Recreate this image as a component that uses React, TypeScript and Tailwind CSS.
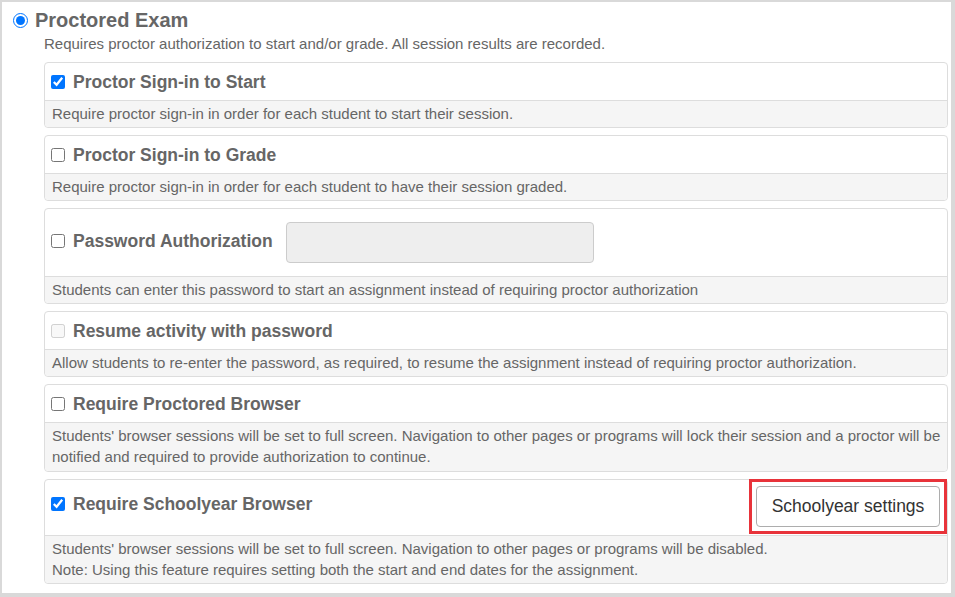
import type { ReactNode } from "react";

type OptionCardProps = {
  title: string;
  checked?: boolean;
  disabled?: boolean;
  headerClass: string;
  labelClass?: string;
  footerClass?: string;
  aside?: ReactNode;
  children: ReactNode;
};

function OptionCard({
  title,
  checked = false,
  disabled = false,
  headerClass,
  labelClass = "",
  footerClass = "pt-[2px] pb-[3px]",
  aside,
  children,
}: OptionCardProps) {
  return (
    <div className="mr-[3px] ml-[42px] overflow-visible rounded-[4px] border border-[#dddddd] bg-white">
      <div className={`flex pr-[7px] pl-[6px] ${headerClass}`}>
        <label className={`flex items-center gap-[8px] ${labelClass}`}>
          <input
            type="checkbox"
            defaultChecked={checked}
            disabled={disabled}
            className="m-0 h-[14px] w-[14px] accent-[#0075ff]"
          />
          <span className="text-[17.5px] leading-[24px] font-bold text-[#666666]">{title}</span>
        </label>
        {aside}
      </div>
      <div
        className={`rounded-b-[4px] border-t border-[#dddddd] bg-[#f5f5f5] pr-[6px] pl-[7px] text-[15px] leading-[21px] text-[#666666] ${footerClass}`}
      >
        {children}
      </div>
    </div>
  );
}

export default function App() {
  return (
    <div
      className="h-[597px] w-[955px] overflow-hidden border-t-2 border-r-4 border-b-4 border-l-2 border-[#d9d9d9] bg-white"
      style={{ fontFamily: '"Liberation Sans", Arial, sans-serif' }}
    >
      <div className="pt-[6px]">
        <label className="flex h-[24px] items-center gap-[7px] pl-[11px]">
          <input type="radio" defaultChecked name="mode" className="m-0 h-[15px] w-[15px] accent-[#0075ff]" />
          <span className="text-[20px] leading-[24px] font-bold text-[#666666]">Proctored Exam</span>
        </label>
        <p className="mt-[2px] mb-[8px] pl-[42px] text-[15px] leading-[20px] text-[#666666]">
          Requires proctor authorization to start and/or grade. All session results are recorded.
        </p>

        <div className="flex flex-col gap-[7px]">
          <OptionCard title="Proctor Sign-in to Start" checked headerClass="h-[37px] items-center">
            Require proctor sign-in in order for each student to start their session.
          </OptionCard>

          <OptionCard title="Proctor Sign-in to Grade" headerClass="h-[37px] items-center">
            Require proctor sign-in in order for each student to have their session graded.
          </OptionCard>

          <OptionCard
            title="Password Authorization"
            headerClass="h-[67px] items-center gap-[13px]"
            labelClass="mb-[4px]"
            aside={
              <input
                type="text"
                disabled
                className="h-[41px] w-[308px] rounded-[4px] border border-[#cccccc] bg-[#eeeeee]"
              />
            }
          >
            Students can enter this password to start an assignment instead of requiring proctor authorization
          </OptionCard>

          <OptionCard title="Resume activity with password" disabled headerClass="h-[37px] items-center">
            Allow students to re-enter the password, as required, to resume the assignment instead of requiring
            proctor authorization.
          </OptionCard>

          <OptionCard
            title="Require Proctored Browser"
            headerClass="h-[37px] items-center"
            footerClass="pt-[2px] pb-[4px]"
          >
            Students' browser sessions will be set to full screen. Navigation to other pages or programs will lock
            their session and a proctor will be notified and required to provide authorization to continue.
          </OptionCard>

          <OptionCard
            title="Require Schoolyear Browser"
            checked
            headerClass="h-[55px] items-start justify-between pt-[6px]"
            labelClass="mt-[6px]"
            footerClass="pt-[2px] pb-[3px]"
            aside={
              <div className="relative">
                <button className="h-[41px] w-[184px] rounded-[4px] border border-[#adadad] bg-white text-[17.5px] text-[#333333]">
                  Schoolyear settings
                </button>
                <div className="pointer-events-none absolute -top-[7px] -right-[7px] -bottom-[7px] -left-[7px] border-[3px] border-[#e8333a]" />
              </div>
            }
          >
            <p>
              Students' browser sessions will be set to full screen. Navigation to other pages or programs will be
              disabled.
            </p>
            <p>Note: Using this feature requires setting both the start and end dates for the assignment.</p>
          </OptionCard>
        </div>
      </div>
    </div>
  );
}
